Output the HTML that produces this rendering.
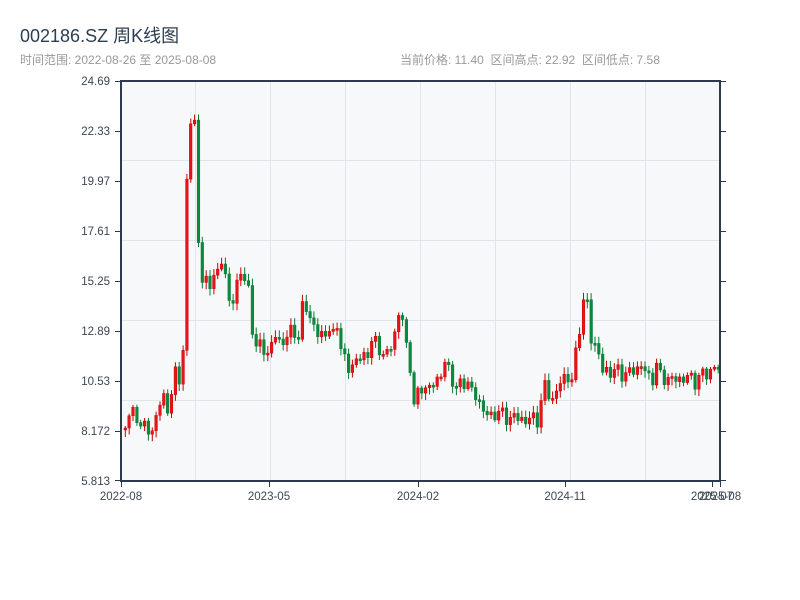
<!DOCTYPE html>
<html><head><meta charset="utf-8"><style>
body{margin:0;width:800px;height:600px;background:#fff;overflow:hidden;font-family:"Liberation Sans","Noto Sans CJK SC",sans-serif;position:relative}
.t{position:absolute;left:20px;top:22px;font-size:18px;color:#2c3e50}
.s{position:absolute;top:51px;font-size:12px;color:#999}
</style></head><body>
<div class="t">002186.SZ 周K线图</div>
<div class="s" style="left:20px">时间范围: 2022-08-26 至 2025-08-08</div>
<div class="s" style="left:400px">当前价格: 11.40 &nbsp;区间高点: 22.92 &nbsp;区间低点: 7.58</div>
<svg id="c" width="800" height="600" style="position:absolute;left:0;top:0" xmlns="http://www.w3.org/2000/svg">
<rect x="121" y="81" width="599" height="400" fill="#f7f8fa"/>
<g stroke="#e1e4e8" stroke-width="1">
<line x1="121" y1="160.5" x2="720" y2="160.5"/><line x1="121" y1="240.5" x2="720" y2="240.5"/>
<line x1="121" y1="320.5" x2="720" y2="320.5"/><line x1="121" y1="400.5" x2="720" y2="400.5"/>
<line x1="195.5" y1="81" x2="195.5" y2="481"/><line x1="270.5" y1="81" x2="270.5" y2="481"/>
<line x1="345.5" y1="81" x2="345.5" y2="481"/><line x1="420.5" y1="81" x2="420.5" y2="481"/>
<line x1="495.5" y1="81" x2="495.5" y2="481"/><line x1="570.5" y1="81" x2="570.5" y2="481"/>
<line x1="645.5" y1="81" x2="645.5" y2="481"/>
</g>
<g id="k"></g>
<g stroke="#2b3a4e" stroke-width="2" fill="none">
<rect x="121" y="81" width="599" height="400"/>
</g>
<g stroke="#2b3a4e" stroke-width="1">
<line x1="115" y1="81.5" x2="121" y2="81.5"/><line x1="115" y1="131.5" x2="121" y2="131.5"/>
<line x1="115" y1="181.5" x2="121" y2="181.5"/><line x1="115" y1="231.5" x2="121" y2="231.5"/>
<line x1="115" y1="281.5" x2="121" y2="281.5"/><line x1="115" y1="331.5" x2="121" y2="331.5"/>
<line x1="115" y1="381.5" x2="121" y2="381.5"/><line x1="115" y1="431.5" x2="121" y2="431.5"/>
<line x1="115" y1="480.5" x2="121" y2="480.5"/>
<line x1="720" y1="81.5" x2="726" y2="81.5"/><line x1="720" y1="131.5" x2="726" y2="131.5"/>
<line x1="720" y1="181.5" x2="726" y2="181.5"/><line x1="720" y1="231.5" x2="726" y2="231.5"/>
<line x1="720" y1="281.5" x2="726" y2="281.5"/><line x1="720" y1="331.5" x2="726" y2="331.5"/>
<line x1="720" y1="381.5" x2="726" y2="381.5"/><line x1="720" y1="431.5" x2="726" y2="431.5"/>
<line x1="720" y1="480.5" x2="726" y2="480.5"/>
<line x1="121.5" y1="481" x2="121.5" y2="487"/><line x1="269.5" y1="481" x2="269.5" y2="487"/>
<line x1="418.5" y1="481" x2="418.5" y2="487"/><line x1="565.5" y1="481" x2="565.5" y2="487"/>
<line x1="712.5" y1="481" x2="712.5" y2="487"/><line x1="720.5" y1="481" x2="720.5" y2="487"/>
</g>
<g font-size="11.5" fill="#3c4654" text-anchor="end" font-family="Liberation Sans,sans-serif">
<text x="110" y="85">24.69</text><text x="110" y="135">22.33</text><text x="110" y="185">19.97</text>
<text x="110" y="235">17.61</text><text x="110" y="285">15.25</text><text x="110" y="335">12.89</text>
<text x="110" y="385">10.53</text><text x="110" y="435">8.172</text><text x="110" y="485">5.813</text>
</g>
<g font-size="11.5" fill="#3c4654" text-anchor="middle" font-family="Liberation Sans,sans-serif">
<text x="121" y="500">2022-08</text><text x="269" y="500">2023-05</text><text x="418" y="500">2024-02</text>
<text x="565" y="500">2024-11</text><text x="712" y="500">2025-07</text><text x="720" y="500">2025-08</text>
</g>
</svg>
<script>
(function(){
var P=[[124,425],[128,412],[135,418],[142,425],[146,432],[152,430],[157,405],[163,398],[168,415],[172,372],[178,380],[182,345],[185,200],[188,122],[192,120],[196,122],[197,240],[200,280],[205,282],[210,285],[214,265],[218,285],[222,240],[226,300],[230,310],[234,290],[238,270],[244,280],[248,295],[252,340],[256,345],[262,350],[268,352],[274,335],[280,345],[286,335],[292,330],[298,338],[302,300],[306,310],[310,320],[316,335],[320,335],[328,330],[334,340],[336,320],[340,350],[344,362],[348,370],[354,360],[360,358],[366,355],[370,340],[376,345],[380,352],[386,355],[392,340],[396,320],[400,305],[404,350],[408,340],[410,400],[414,405],[418,390],[422,385],[428,390],[434,380],[440,375],[444,360],[450,378],[456,388],[460,385],[466,380],[470,390],[476,400],[480,405],[486,415],[490,418],[496,410],[502,415],[506,420],[512,415],[518,420],[524,420],[530,418],[536,420],[540,400],[544,385],[548,395],[552,400],[556,390],[560,380],[566,375],[570,385],[575,350],[580,315],[583,295],[586,305],[590,340],[594,345],[598,355],[602,375],[606,370],[610,372],[616,370],[622,375],[628,372],[634,370],[640,365],[646,375],[650,380],[654,375],[656,360],[658,375],[664,378],[670,380],[676,378],[682,380],[688,375],[694,382],[700,375],[706,372],[712,370],[716,368],[720,362]];
function yAt(x){for(var i=1;i<P.length;i++){if(x<=P[i][0]){var a=P[i-1],b=P[i];return a[1]+(b[1]-a[1])*(x-a[0])/(b[0]-a[0]);}}return P[P.length-1][1];}
var NS='http://www.w3.org/2000/svg',g=document.getElementById('k');
function el(n,a){var e=document.createElementNS(NS,n);for(var k in a)e.setAttribute(k,String(a[k]));g.appendChild(e);}
var prev=yAt(124)+4;
for(var i=0;i<155;i++){var x=124+i*3.85;if(x>718)break;
var c=yAt(x)+Math.sin(i*2.3)*5+Math.cos(i*1.7)*3;
var o=prev,tp=Math.min(o,c),bt=Math.max(o,c);if(bt-tp<2){bt=tp+2;}
var hi=tp-(2+Math.abs(Math.sin(i*3.1))*5),lo=bt+(2+Math.abs(Math.cos(i*2.7))*5);
var up=c<o,col=up?'#e8141b':'#0a8a3c',st=up?'#c00':'#0a7a34';
el('line',{x1:(x+1.3).toFixed(1),y1:hi.toFixed(1),x2:(x+1.3).toFixed(1),y2:lo.toFixed(1),stroke:st,'stroke-width':1});
el('rect',{x:x.toFixed(1),y:tp.toFixed(1),width:2.6,height:(bt-tp).toFixed(1),fill:col,stroke:st,'stroke-width':0.5});
prev=c;}
})();
</script>
</body></html>
